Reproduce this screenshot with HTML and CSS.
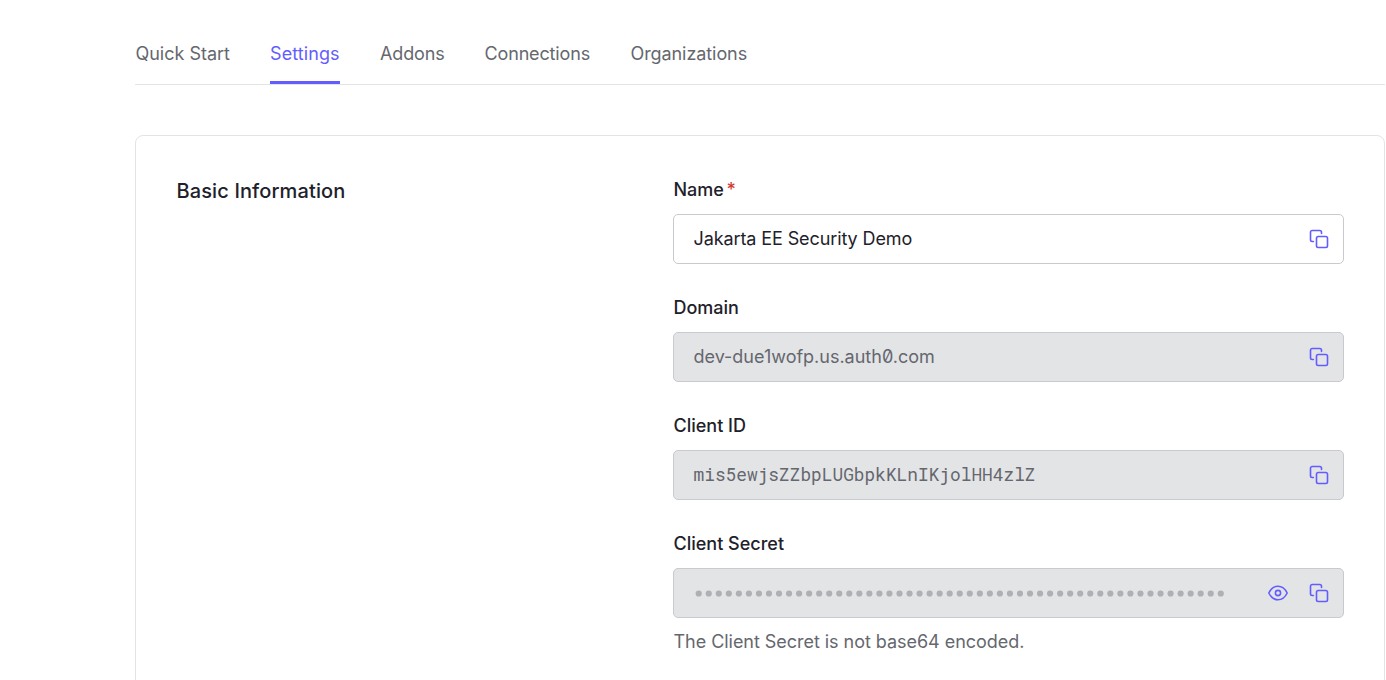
FILE: index.html
```html
<!DOCTYPE html>
<html lang="en">
<head>
<meta charset="utf-8">
<title>Application Settings</title>
<link rel="stylesheet" href="styles.css">
</head>
<body>
<svg class="sprite" aria-hidden="true">
  <symbol id="copy" viewBox="0 0 20 20">
    <path d="M4.4 12.5H3.200a1.7 1.7 0 0 1-1.7-1.7V3.200A1.7 1.7 0 0 1 3.200 1.500h7.600A1.7 1.7 0 0 1 12.500 3.200v1.2"/>
    <rect x="7.5" y="7.5" width="11" height="11" rx="1.7"/>
  </symbol>
  <symbol id="eye" viewBox="0 0 20 20">
    <path d="M.8 10C2.800 6 6 3.200 10 3.200S17.200 6 19.200 10C17.200 14 14 16.800 10 16.800S2.800 14 .8 10Z"/>
    <circle cx="10" cy="10" r="2.600"/>
  </symbol>
</svg>
<main class="page">
  <nav class="tabs">
    <a class="tab tab-quick">Quick Start</a>
    <a class="tab tab-active">Settings</a>
    <a class="tab tab-addons">Addons</a>
    <a class="tab tab-connections">Connections</a>
    <a class="tab tab-organizations">Organizations</a>
  </nav>
  <section class="card">
    <h2 class="card-title">Basic Information</h2>
    <div class="fields">
      <div class="field">
        <div class="label">Name<span class="required">*</span></div>
        <div class="input"><span class="value name">Jakarta EE Security Demo</span><svg class="icon"><use href="#copy"/></svg></div>
      </div>
      <div class="field">
        <div class="label">Domain</div>
        <div class="input readonly"><span class="value domain">dev-due1wofp.us.auth0.com</span><svg class="icon"><use href="#copy"/></svg></div>
      </div>
      <div class="field">
        <div class="label">Client ID</div>
        <div class="input readonly"><span class="value mono">mis5ewjsZZbpLUGbpkKLnIKjolHH4zlZ</span><svg class="icon"><use href="#copy"/></svg></div>
      </div>
      <div class="field">
        <div class="label">Client Secret</div>
        <div class="input readonly">
          <svg class="value dots" viewBox="0 0 533 8"><line x1="4.700" y1="4.500" x2="528" y2="4.500"/></svg>
          <svg class="icon"><use href="#eye"/></svg><svg class="icon"><use href="#copy"/></svg>
        </div>
        <div class="hint">The Client Secret is not base64 encoded.</div>
      </div>
    </div>
  </section>
</main>
</body>
</html>
```
FILE: styles.css
```css
* { box-sizing: border-box; }
body {
  margin: 0;
  height: 680px;
  overflow: hidden;
  background: #fff;
  color: #1e212a;
  font-family: Inter, sans-serif;
  font-size: 18px;
  line-height: 26px;
}
.sprite { display: none; }
.page { width: 1250px; height: 680px; overflow: hidden; margin-left: 135px; padding-top: 41px; }
.tabs {
  display: flex;
  gap: 40px;
  height: 44px;
  border-bottom: 1px solid #e3e4e6;
}
.tab { height: 43px; color: #65676e; white-space: nowrap; }
.tab-quick { width: 95px; padding-left: 0.4px; }
.tab-active { width: 70px; color: #635dff; border-bottom: 3px solid #635dff; letter-spacing: 0.1px; }
.tab-addons { width: 64.5px; letter-spacing: -0.15px; }
.tab-connections { width: 106px; letter-spacing: -0.15px; }
.tab-organizations { letter-spacing: -0.08px; }
.card {
  display: flex;
  justify-content: space-between;
  height: 620px;
  margin-top: 50px;
  padding: 40px 40px 0;
  border: 1px solid #e3e4e6;
  border-radius: 8px;
}
.card-title { margin: 0; font-size: 20px; font-weight: 500; line-height: 30px; letter-spacing: 0.12px; padding-left: 0.5px; }
.fields { width: 671px; }
.field { height: 118px; }
.label { height: 38px; padding-left: 0.5px; line-height: 27px; font-weight: 500; }
.required { margin-left: 2.5px; color: #d03c38; }
.input {
  display: flex;
  align-items: center;
  gap: 21px;
  height: 50px;
  padding: 0 14px 0 19.5px;
  border: 1px solid #c9cace;
  border-radius: 5px;
}
.readonly { background: #e3e4e6; color: #65676e; }
.value { flex: 1; white-space: nowrap; }
.name { letter-spacing: -0.1px; }
.domain { font-feature-settings: "zero"; }
.mono { padding-bottom: 2px; font-family: "Roboto Mono", "DejaVu Sans Mono", monospace; font-size: 17.82px; }
.dots { flex: none; width: 533px; height: 8px; margin-right: auto; }
.dots line { stroke: #aeb0b4; stroke-width: 6.2; stroke-linecap: round; stroke-dasharray: 0 10.04; }
.icon { flex: none; width: 20px; height: 20px; fill: none; stroke: #635dff; stroke-width: 1.6; stroke-linecap: round; stroke-linejoin: round; }
.hint { margin-top: 11px; padding-left: 0.5px; color: #65676e; letter-spacing: -0.04px; }
```
